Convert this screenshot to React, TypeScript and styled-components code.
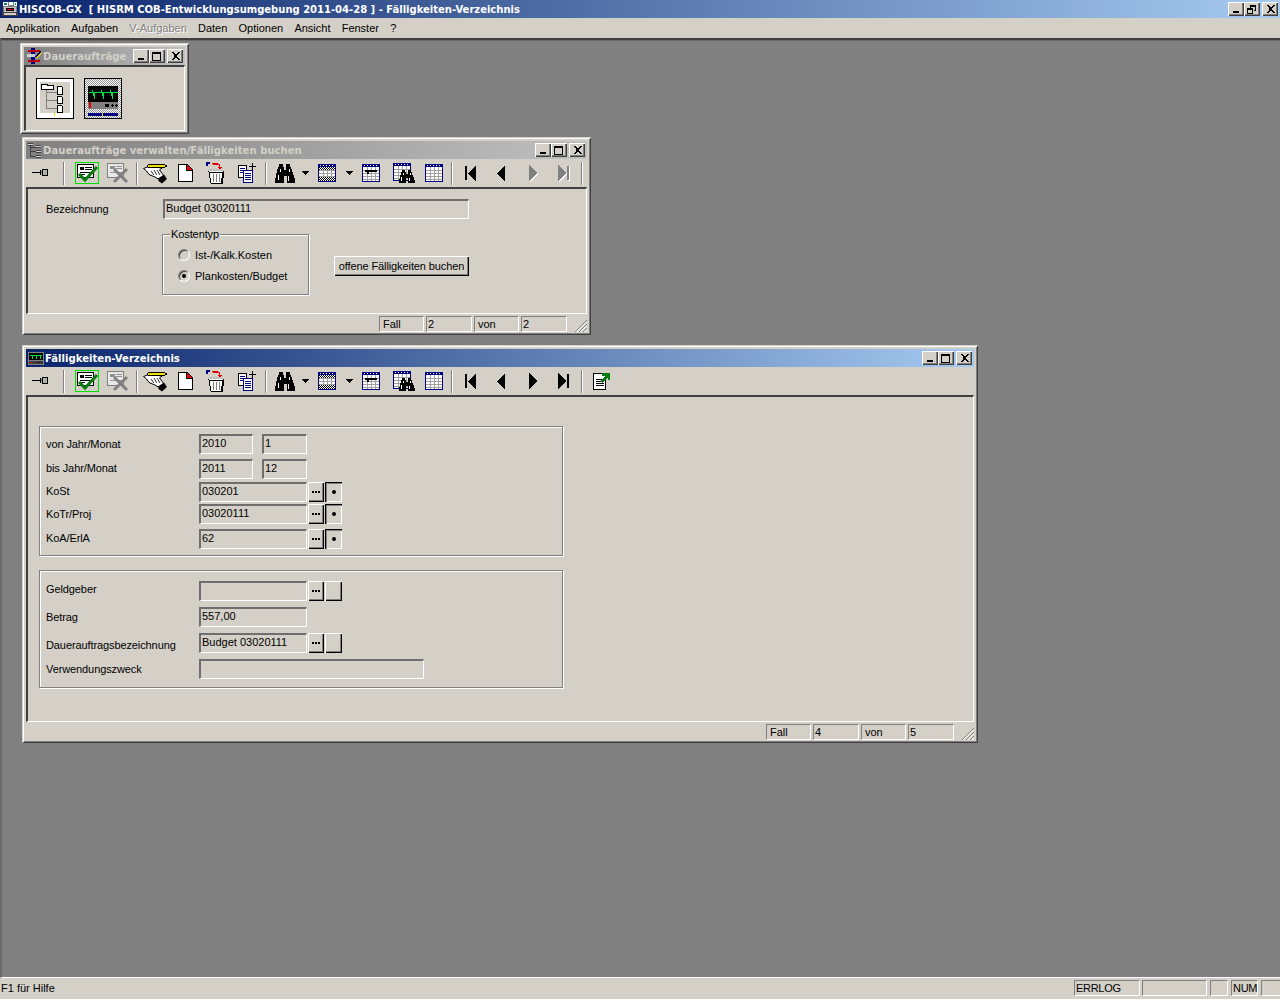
import React from "react";
import styled, { createGlobalStyle } from "styled-components";

const FACE = "#d4d0c8";

const GlobalStyle = createGlobalStyle`
  html, body {
    margin: 0;
    padding: 0;
    background: ${FACE};
  }
  * {
    box-sizing: border-box;
  }
`;

const Frame = styled.div`
  width: 1280px;
  height: 1000px;
  display: flex;
  flex-direction: column;
  overflow: hidden;
  background: ${FACE};
  font-family: "Liberation Sans", Arial, sans-serif;
  font-size: 11px;
  color: #000;
`;

const AppTitle = styled.div`
  height: 18px;
  flex: none;
  display: flex;
  align-items: center;
  padding: 0 2px 0 2px;
  background: linear-gradient(to right, #0a246a, #a6caf0);
  color: #fff;
  font-family: "DejaVu Sans", Verdana, sans-serif;
  font-weight: bold;
  font-size: 10px;
  white-space: pre;
`;

const AppTitleText = styled.span`
  flex: 1;
  margin-left: 1px;
`;

const MenuBar = styled.div`
  height: 20px;
  flex: none;
  display: flex;
  align-items: center;
  gap: 11.2px;
  padding-left: 6px;
`;

const MenuItem = styled.span<{ $disabled?: boolean }>`
  color: ${(p) => (p.$disabled ? "#808080" : "#000")};
  text-shadow: ${(p) => (p.$disabled ? "1px 1px 0 #fff" : "none")};
`;

const Desktop = styled.div`
  position: relative;
  flex: 1;
  background: #808080;
  border-top: 2px solid #404040;
  border-left: 2px solid #6a6a6a;
  border-bottom: 1px solid #fff;
  box-shadow: inset 0 1px 0 #6a6a6a;
`;

const Win = styled.div<{ $x: number; $y: number; $w: number; $h: number }>`
  position: absolute;
  left: ${(p) => p.$x}px;
  top: ${(p) => p.$y}px;
  width: ${(p) => p.$w}px;
  height: ${(p) => p.$h}px;
  display: flex;
  flex-direction: column;
  padding: 4px 4px 3px;
  background: ${FACE};
  box-shadow: inset 1px 1px 0 ${FACE}, inset -1px -1px 0 #404040,
    inset 2px 2px 0 #fff, inset -2px -2px 0 #808080;
`;

const WinTitle = styled.div<{ $active?: boolean }>`
  height: 18px;
  flex: none;
  display: flex;
  align-items: center;
  padding: 0 2px 0 2px;
  background: ${(p) =>
    p.$active
      ? "linear-gradient(to right, #0a246a, #a6caf0)"
      : "linear-gradient(to right, #808080, #c0c0c0)"};
  color: ${(p) => (p.$active ? "#fff" : FACE)};
  font-family: "DejaVu Sans", Verdana, sans-serif;
  font-weight: bold;
  font-size: 10.1px;
  white-space: nowrap;
`;

const WinTitleText = styled.span`
  flex: 1;
  margin-left: 1px;
  overflow: hidden;
`;

const CaptionButtons = styled.div`
  display: flex;
  flex: none;
`;

const CapButton = styled.div<{ $close?: boolean }>`
  width: 16px;
  height: 14px;
  margin-left: ${(p) => (p.$close ? "2px" : "0")};
  display: flex;
  align-items: center;
  justify-content: center;
  background: ${FACE};
  box-shadow: inset 1px 1px 0 #fff, inset -1px -1px 0 #404040,
    inset -2px -2px 0 #808080;
`;

const Toolbar = styled.div`
  height: 28px;
  flex: none;
  display: flex;
  align-items: center;
`;

const ToolSlot = styled.div<{ $w: number }>`
  width: ${(p) => p.$w}px;
  height: 24px;
  flex: none;
  display: flex;
  align-items: center;
  justify-content: center;
`;

const ToolSep = styled.div`
  width: 2px;
  height: 23px;
  background: #808080;
  border-right: 1px solid #fff;
`;

const Body = styled.div`
  flex: 1;
  min-height: 0;
  border-top: 2px solid #404040;
  border-left: 2px solid #404040;
  border-right: 1px solid #fff;
  border-bottom: 1px solid #fff;
`;

const IconBody = styled(Body)`
  display: flex;
  gap: 10px;
  padding: 11px 0 0 10px;
`;

const OrderBody = styled(Body)`
  padding: 10px 0 0 18px;
`;

const ListBody = styled(Body)`
  padding: 29px 0 0 11px;
`;

const StatusRow = styled.div`
  height: 18px;
  flex: none;
  display: flex;
  justify-content: flex-end;
  align-items: flex-end;
  gap: 2px;
`;

const StatusCell = styled.div<{ $w: number }>`
  width: ${(p) => p.$w}px;
  height: 16px;
  padding-left: ${(p) => (p.$w === 46 ? 1 : 3)}px;
  line-height: 14px;
  border-top: 1px solid #808080;
  border-left: 1px solid #808080;
  border-right: 1px solid #fff;
  border-bottom: 1px solid #fff;
`;

const Grip = styled.div`
  width: 18px;
  height: 16px;
  display: flex;
  align-items: flex-end;
  justify-content: flex-end;
`;

const Row = styled.div`
  display: flex;
  align-items: center;
`;

const FormRow = styled(Row)<{ $top?: number }>`
  height: 19px;
  margin-top: ${(p) => p.$top ?? 0}px;
`;

const FieldLabel = styled.span<{ $w: number; $nudge?: number }>`
  width: ${(p) => p.$w}px;
  flex: none;
  margin-top: ${(p) => (p.$nudge ?? 0) * 2}px;
  letter-spacing: -0.1px;
  white-space: nowrap;
`;

const Field = styled.div<{ $w: number; $ml?: number }>`
  width: ${(p) => p.$w}px;
  height: 20px;
  flex: none;
  margin-left: ${(p) => p.$ml ?? 0}px;
  padding-left: 1px;
  line-height: 15px;
  border-top: 2px solid #6e6e6e;
  border-left: 2px solid #6e6e6e;
  border-right: 1px solid #fff;
  border-bottom: 1px solid #fff;
  white-space: nowrap;
`;

const Group = styled.div<{ $top?: number; $pt: number; $pb: number }>`
  width: 524px;
  margin-top: ${(p) => p.$top ?? 0}px;
  padding: ${(p) => p.$pt}px 0 ${(p) => p.$pb}px 6px;
  border: 1px solid #808080;
  box-shadow: 1px 1px 0 #fff, inset 1px 1px 0 #fff;
`;

const PickButton = styled.div<{ $pressed?: boolean; $plain?: boolean }>`
  width: ${(p) => (p.$pressed || p.$plain ? "17px" : "16px")};
  height: 20px;
  flex: none;
  display: flex;
  align-items: center;
  justify-content: center;
  margin-left: 1px;
  box-shadow: ${(p) =>
    p.$pressed
      ? "inset 1px 1px 0 #000, inset 2px 2px 0 #808080, inset -1px -1px 0 #fff"
      : "inset 1px 1px 0 #fff, inset -1px -1px 0 #000, inset -2px -2px 0 #808080"};
`;

const Ellipsis = styled.span`
  display: block;
  width: 8px;
  height: 2px;
  margin-right: 1px;
  background: repeating-linear-gradient(
    to right,
    #000 0 2px,
    transparent 2px 3px
  );
`;

const Dot = styled.span`
  display: block;
  width: 4px;
  height: 4px;
  margin: 1px 0 0 1px;
  background: #000;
  border-radius: 50%;
`;

const TypeRow = styled(Row)`
  align-items: flex-start;
  margin: 10px 0 0 116px;
`;

const TypeBox = styled.fieldset`
  width: 147px;
  height: 67px;
  margin: 0;
  padding: 3px 0 0 0;
  border: 1px solid #808080;
  box-shadow: 1px 1px 0 #fff, inset 1px 1px 0 #fff;
`;

const TypeLegend = styled.legend`
  padding: 0 1px;
  margin-left: 7px;
  line-height: 13px;
  letter-spacing: -0.1px;
  background: ${FACE};
`;

const RadioRow = styled(Row)`
  height: 21px;
  gap: 5px;
  margin-left: 15px;
`;

const Radio = styled.span<{ $on?: boolean }>`
  width: 12px;
  height: 12px;
  flex: none;
  border-radius: 50%;
  display: flex;
  align-items: center;
  justify-content: center;
  border: 1px solid;
  border-color: #808080 #fff #fff #808080;
  box-shadow: inset 1px 1px 0 #404040, inset -1px -1px 0 ${FACE};
  &::after {
    content: "";
    width: 4px;
    height: 4px;
    border-radius: 50%;
    background: ${(p) => (p.$on ? "#000" : "transparent")};
  }
`;

const PushButton = styled.div`
  width: 135px;
  height: 20px;
  margin: 28px 0 0 25px;
  display: flex;
  align-items: center;
  justify-content: center;
  letter-spacing: -0.1px;
  white-space: nowrap;
  box-shadow: inset 1px 1px 0 #fff, inset -1px -1px 0 #000,
    inset -2px -2px 0 #808080;
`;

const BottomBar = styled.div`
  height: 22px;
  flex: none;
  display: flex;
  align-items: center;
  justify-content: space-between;
  padding: 0 0 2px 1px;
  border-bottom: 1px solid #fff;
`;

const BottomCells = styled.div`
  display: flex;
  margin-right: -1px;
`;

const BottomCell = styled.div<{ $w: number; $ml: number }>`
  width: ${(p) => p.$w}px;
  height: 16px;
  margin-left: ${(p) => p.$ml}px;
  padding-left: 1px;
  line-height: 15px;
  letter-spacing: -0.3px;
  border-top: 1px solid #808080;
  border-left: 1px solid #808080;
  border-right: 1px solid #fff;
  border-bottom: 1px solid #fff;
`;

const Pixel: React.FC<{ w: number; h: number; children: React.ReactNode }> = ({
  w,
  h,
  children,
}) => (
  <svg
    width={w}
    height={h}
    viewBox={`0 0 ${w} ${h}`}
    shapeRendering="crispEdges"
    style={{ display: "block", flex: "none" }}
  >
    {children}
  </svg>
);

const MinGlyph = () => (
  <Pixel w={9} h={9}>
    <rect x="1" y="6" width="6" height="2" fill="#000" />
  </Pixel>
);
const MaxGlyph = () => (
  <Pixel w={10} h={9}>
    <path d="M0 0h9v9H0zM1 2v6h7V2z" fill="#000" fillRule="evenodd" />
  </Pixel>
);
const RestoreGlyph = () => (
  <Pixel w={10} h={9}>
    <path
      d="M3 0h6v6H7V5h1V2H4v1H3zM0 3h6v6H0zM1 5v3h4V5z"
      fill="#000"
      fillRule="evenodd"
    />
  </Pixel>
);
const CloseGlyph = () => (
  <Pixel w={9} h={8}>
    <path
      d="M0 0h2l2 2h1l2-2h2L6 3v2l3 3H7L5 6H4L2 8H0l3-3V3z"
      fill="#000"
    />
  </Pixel>
);

const PinIcon = () => (
  <Pixel w={18} h={12}>
    <path d="M0 5h8v1H0z" fill="#000" />
    <path d="M8 3h1v5H8z" fill="#000" />
    <path d="M9 4h1v3H9z" fill="#808080" />
    <path d="M10 2h6v1h-6zM10 8h6v1h-6zM15 2h1v7h-1zM10 2h1v7h-1z" fill="#000" />
    <path d="M11 3h4v5h-4z" fill="#b0b0b0" />
  </Pixel>
);

const CardIcon = () => (
  <Pixel w={24} h={22}>
    <rect x="0.5" y="0.5" width="23" height="21" fill="none" stroke="#00e000" />
    <path d="M2 2h17v14H2z" fill="#000" />
    <path d="M3 3h15v12H3z" fill="#fff" />
    <path d="M5 5h4v3H5zM10 5h7v1h-7zM10 7h7v1h-7zM5 10h12v1H5zM5 12h5v1H5z" fill="#000" />
    <polyline
      points="4,12 10,18 22,5"
      fill="none"
      stroke="#087b10"
      strokeWidth="3"
      shapeRendering="auto"
    />
  </Pixel>
);

const CardOffIcon = () => (
  <Pixel w={24} h={22}>
    <path d="M1 1h17v15H1z" fill="#808080" />
    <path d="M2 2h15v13H2z" fill="#e8e8e8" />
    <path d="M4 4h5v3H4zM10 4h6v1h-6zM10 6h6v1h-6zM4 10h12v1H4z" fill="#909090" />
    <path
      d="M8 7l13 13M21 7L8 20"
      fill="none"
      stroke="#808080"
      strokeWidth="3"
      shapeRendering="auto"
    />
  </Pixel>
);

const HandIcon = () => (
  <Pixel w={24} h={21}>
    <g shapeRendering="auto">
      <path
        d="M0.5 5.5L6 3.5 19 5 16.5 7 21 13 17 17 12 14 6 11.5 3.5 8z"
        fill="#fff"
        stroke="#000"
      />
      <path d="M8 8l3 4M11 7l3 5M14 7l3 5" fill="none" stroke="#000" strokeWidth="0.8" />
      <path d="M15 15.5L21 11.5 24 16 19 20.5 15.5 18z" fill="#000" />
    </g>
    <path d="M5 1h17v1H5zM5 4h17v1H5zM22 2h2v2h-2zM4 2h1v2H4z" fill="#000" />
    <path d="M5 2h17v2H5z" fill="#f0e000" />
  </Pixel>
);

const PageIcon = () => (
  <Pixel w={15} h={18}>
    <path d="M0 0h9l6 6v12H0z" fill="#000" />
    <path d="M1 1h7v6h6v10H1z" fill="#fff" />
    <path d="M9 1l5 5H9z" fill="#e00000" />
  </Pixel>
);

const TrashIcon = () => (
  <Pixel w={20} h={22}>
    <path d="M0 0h4v2H2v2H0z" fill="#000080" />
    <path d="M6 1h6v1h2v3h2l-2 3-3-3h2V3H7V2H6z" fill="#e00000" />
    <path d="M2 9h16v2l-1 10-1 1H5l-1-1-1-10-1-1z" fill="#000" />
    <path d="M3 9h14v1H3zM4 11h12l-1 10H5z" fill="#fff" />
    <path d="M7 12h1v8H7zM10 12h1v8h-1zM13 12h1v8h-1z" fill="#808080" />
    <path d="M3 7h14v2H3z" fill="#c0c0c0" />
  </Pixel>
);

const CopyIcon = () => (
  <Pixel w={18} h={20}>
    <path d="M0 2h9v13H0z" fill="#000" />
    <path d="M1 3h7v11H1z" fill="#fff" />
    <path d="M2 5h5v1H2zM2 7h5v1H2zM2 9h5v1H2z" fill="#000080" />
    <path d="M5 7h10v13H5z" fill="#000080" />
    <path d="M6 8h8v11H6z" fill="#fff" />
    <path d="M7 10h6v1H7zM7 12h6v1H7zM7 14h6v1H7zM7 16h6v1H7z" fill="#000080" />
    <path d="M14 0h1v3h3v1h-3v3h-1V4h-3V3h3z" fill="#000" />
  </Pixel>
);

const BinocularShape = () => (
  <>
    <path d="M4 1h4v3h1v3h2V4V1h4v3h1l4 13v3h-8v-7H9v7H0v-3L3 4h1z" fill="#000" />
    <path d="M5 6h1v3H5zM14 6h1v3h-1zM3 12h1v5H3zM13 13h1v5h-1z" fill="#fff" />
  </>
);

const BinocularIcon = () => (
  <Pixel w={20} h={21}>
    <BinocularShape />
  </Pixel>
);

const Drop = () => (
  <Pixel w={7} h={4}>
    <path d="M0 0h7v1H6v1H5v1H4v1H3V3H2V2H1V1H0z" fill="#000" />
  </Pixel>
);

const TableLines = () => (
  <>
    <path d="M0 0h18v18H0z" fill="#000080" />
    <path d="M1 3h16v14H1z" fill="#fff" />
    <path
      d="M1 6h16v1H1zM1 9h16v1H1zM1 12h16v1H1zM1 15h16v1H1zM5 3h1v14H5zM9 3h1v14H9zM13 3h1v14h-1z"
      fill="#a0a0a0"
    />
    <path d="M2 1h1v1H2zM5 1h1v1H5zM8 1h1v1H8zM11 1h1v1h-1zM14 1h1v1h-1z" fill="#fff" />
  </>
);

const CheckerIcon = () => (
  <Pixel w={18} h={18}>
    <defs>
      <pattern id="chk" width="2" height="2" patternUnits="userSpaceOnUse">
        <rect width="2" height="2" fill="#fff" />
        <rect width="1" height="1" fill="#000" />
        <rect x="1" y="1" width="1" height="1" fill="#000" />
      </pattern>
    </defs>
    <TableLines />
    <path d="M1 3h16v3H1zM1 13h16v4H1z" fill="url(#chk)" />
  </Pixel>
);

const FormTableIcon = () => (
  <Pixel w={18} h={18}>
    <TableLines />
    <path d="M3 6h12v2H7v2H5V8H3z" fill="#000" />
  </Pixel>
);

const FindTableIcon = () => (
  <Pixel w={22} h={20}>
    <TableLines />
    <g transform="translate(6 6) scale(0.78 0.68)">
      <BinocularShape />
    </g>
  </Pixel>
);

const TableIcon = () => (
  <Pixel w={18} h={18}>
    <TableLines />
  </Pixel>
);

const Arrow: React.FC<{ d: string; w: number; off?: boolean }> = ({ d, w, off }) => (
  <Pixel w={w + 1} h={17}>
    {off && <path d={d} fill="#fff" transform="translate(1 1)" />}
    <path d={d} fill={off ? "#808080" : "#000"} />
  </Pixel>
);

const FIRST = "M0 1h2v14H0zM11 0v16h-1L3 8z";
const PREV = "M8 0v16h-1L0 8z";
const NEXT = "M0 0v16h1l7-8z";
const LAST = "M9 1h2v14H9zM0 0v16h1l7-8z";

const ExportIcon = () => (
  <Pixel w={17} h={18}>
    <path d="M0 1h10l3 3v14H0z" fill="#000" />
    <path d="M1 2h8l3 3v12H1z" fill="#fff" />
    <path d="M3 7h7v1H3zM3 9h8v1H3zM3 11h8v1H3zM3 13h8v1H3z" fill="#000" />
    <path d="M9 1h8v7h-2V5l-6 6-2-2 6-5H9z" fill="#087b10" />
  </Pixel>
);

const GripIcon = () => (
  <Pixel w={14} h={13}>
    <g stroke="#808080" strokeWidth="1" shapeRendering="auto">
      <path d="M2 13L14 1M6 13l8-8M10 13l4-4" />
    </g>
    <g stroke="#fff" strokeWidth="1" shapeRendering="auto">
      <path d="M3.5 13L14 2.5M7.5 13L14 6.5M11.5 13L14 10.5" />
    </g>
  </Pixel>
);

const AppIcon = () => (
  <Pixel w={16} h={16}>
    <path d="M1 1h14v14H1z" fill="#808080" />
    <path d="M1 1h5v4H1zM7 1h4v3H7zM12 1h3v4h-3z" fill="#fff" />
    <path d="M2 2h3v2H2zM13 2h1v2h-1z" fill="#00807f" />
    <path d="M2 6h12v5H2z" fill="#c0c0c0" />
    <path d="M4 7h8v3H4z" fill="#000" />
    <path d="M5 8h6v1H5z" fill="#e00000" />
    <path d="M0 11h16v4H0z" fill="#404040" />
    <path d="M2 12h12v2H2z" fill="#d4d0c8" />
  </Pixel>
);

const OrdersIcon = () => (
  <Pixel w={16} h={16}>
    <path d="M5 0h4v16H5z" fill="#000080" />
    <path d="M2 2h12v2H2zM2 12h12v2H2z" fill="#c00000" />
    <path d="M1 6h8v3H1z" fill="#d0d0d0" />
    <path d="M9 9l5-6 2 2-5 6z" fill="#e8d000" />
    <path d="M9 9l5-6 1 1-5 6z" fill="#000080" />
  </Pixel>
);

const TreeSmallIcon = () => (
  <Pixel w={14} h={15}>
    <path d="M0 0h5v3H0zM8 2h5v3H8zM8 7h5v3H8zM8 12h5v3H8z" fill="#d4d0c8" />
    <path d="M0 0h5v1H0zM0 2h5v1H0zM8 2h5v1H8zM8 4h5v1H8zM8 7h5v1H8zM8 9h5v1H8zM8 12h5v1H8zM8 14h5v1H8z" fill="#404040" />
    <path d="M2 3h1v10h5v1H2zM3 4h5v1H3zM3 8h5v1H3z" fill="#404040" />
  </Pixel>
);

const MonitorSmallIcon = () => (
  <Pixel w={16} h={13}>
    <path d="M0 0h16v13H0z" fill="#808080" />
    <path d="M1 1h14v7H1z" fill="#000" />
    <path d="M2 3h12v1H2zM4 3h1v4H4zM8 3h1v4H8zM12 3h1v4h-1z" fill="#00e040" />
    <path d="M1 9h14v3H1z" fill="#404040" />
    <path d="M2 10h2v1H2z" fill="#e00000" />
    <path d="M9 10h1v1H9zM11 10h1v1h-1zM13 10h1v1h-1z" fill="#000" />
  </Pixel>
);

const TreeTile = () => (
  <Pixel w={38} h={41}>
    <path d="M0 0h38v41H0z" fill="#000" />
    <path d="M1 1h36v39H1z" fill="#fff" />
    <path d="M4 4h30v31H4z" fill="#d4d0c8" />
    <path d="M5 6h7v1h6v5H5z" fill="#000" />
    <path d="M6 7h5v1h6v3H6z" fill="#fff" />
    <path d="M10 12h1v19h-1zM11 14h10v1H11zM11 22h10v1H11zM11 30h10v1H11z" fill="#808080" />
    <path d="M21 8h4l2 2v7h-6zM21 18h4l2 2v6h-6zM21 27h4l2 2v6h-6z" fill="#000" />
    <path d="M22 9h3l1 1v6h-4zM22 19h3l1 1v5h-4zM22 28h3l1 1v5h-4z" fill="#fff" />
    <path d="M18 35h1v3h-1z" fill="#f0e000" />
  </Pixel>
);

const MonitorTile = () => (
  <Pixel w={38} h={41}>
    <defs>
      <pattern id="dots" width="2" height="2" patternUnits="userSpaceOnUse">
        <rect width="2" height="2" fill="#fff" />
        <rect width="1" height="1" fill="#909090" />
        <rect x="1" y="1" width="1" height="1" fill="#909090" />
      </pattern>
    </defs>
    <path d="M0 0h38v41H0z" fill="#000" />
    <path d="M1 1h36v39H1z" fill="url(#dots)" />
    <path d="M4 8h30v16H4z" fill="#000" />
    <path d="M4 24h30v7H4z" fill="#808080" />
    <path
      d="M5 14h29v1H5zM8 12h1v2H8zM10 15h1v6h-1zM9 15h1v3H9zM17 12h1v2h-1zM19 15h1v6h-1zM18 15h1v3h-1zM26 12h1v2h-1zM28 15h1v6h-1zM27 15h1v3h-1z"
      fill="#00e040"
    />
    <path d="M5 24h2v6H5z" fill="#e00000" />
    <path d="M21 26h4v3h-4zM27 27h3v1h-3zM28 26h1v3h-1zM31 27h3v1h-3zM32 26h1v3h-1z" fill="#000" />
    <path d="M4 35h30v3H4z" fill="#000080" />
    <path d="M18 35h1v3h-1z" fill="#f0e000" />
  </Pixel>
);

interface ToolDef {
  w: number;
  node?: React.ReactNode;
}

const tools = (off: boolean, withExport: boolean): ToolDef[] => {
  const list: ToolDef[] = [
    { w: 30, node: <PinIcon /> },
    { w: 16 },
    { w: 30, node: <CardIcon /> },
    { w: 32, node: <CardOffIcon /> },
    { w: 6 },
    { w: 30, node: <HandIcon /> },
    { w: 30, node: <PageIcon /> },
    { w: 32, node: <TrashIcon /> },
    { w: 30, node: <CopyIcon /> },
    { w: 8 },
    { w: 30, node: <BinocularIcon /> },
    { w: 10, node: <Drop /> },
    { w: 34, node: <CheckerIcon /> },
    { w: 10, node: <Drop /> },
    { w: 34, node: <FormTableIcon /> },
    { w: 32, node: <FindTableIcon /> },
    { w: 28, node: <TableIcon /> },
    { w: 8 },
    { w: 30, node: <Arrow d={FIRST} w={11} /> },
    { w: 30, node: <Arrow d={PREV} w={8} /> },
    { w: 34, node: <Arrow d={NEXT} w={8} off={off} /> },
    { w: 28, node: <Arrow d={LAST} w={11} off={off} /> },
    { w: 8 },
  ];
  if (withExport) list.push({ w: 30, node: <ExportIcon /> });
  return list;
};

const ToolRow: React.FC<{ off?: boolean; withExport?: boolean }> = ({ off, withExport }) => (
  <Toolbar>
    {tools(!!off, !!withExport).map((t, i) => (
      <ToolSlot key={i} $w={t.w}>
        {t.node ?? <ToolSep />}
      </ToolSlot>
    ))}
  </Toolbar>
);

const Caption: React.FC<{
  icon: React.ReactNode;
  title: string;
  active?: boolean;
}> = ({ icon, title, active }) => (
  <WinTitle $active={active}>
    {icon}
    <WinTitleText>{title}</WinTitleText>
    <CaptionButtons>
      <CapButton><MinGlyph /></CapButton>
      <CapButton><MaxGlyph /></CapButton>
      <CapButton $close><CloseGlyph /></CapButton>
    </CaptionButtons>
  </WinTitle>
);

const Status: React.FC<{ count: string; total: string }> = ({ count, total }) => (
  <StatusRow>
    <StatusCell $w={45}>Fall</StatusCell>
    <StatusCell $w={46}>{count}</StatusCell>
    <StatusCell $w={45}>von</StatusCell>
    <StatusCell $w={46}>{total}</StatusCell>
    <Grip><GripIcon /></Grip>
  </StatusRow>
);

const Picker: React.FC<{ pressed?: boolean }> = ({ pressed }) => (
  <>
    <PickButton><Ellipsis /></PickButton>
    <PickButton $pressed={pressed} $plain={!pressed}>{pressed && <Dot />}</PickButton>
  </>
);

const App: React.FC = () => (
  <Frame>
    <GlobalStyle />
    <AppTitle>
      <AppIcon />
      <AppTitleText>HISCOB-GX  [ HISRM COB-Entwicklungsumgebung 2011-04-28 ] - Fälligkeiten-Verzeichnis</AppTitleText>
      <CaptionButtons>
        <CapButton><MinGlyph /></CapButton>
        <CapButton><RestoreGlyph /></CapButton>
        <CapButton $close><CloseGlyph /></CapButton>
      </CaptionButtons>
    </AppTitle>
    <MenuBar>
      <MenuItem>Applikation</MenuItem>
      <MenuItem>Aufgaben</MenuItem>
      <MenuItem $disabled>V-Aufgaben</MenuItem>
      <MenuItem>Daten</MenuItem>
      <MenuItem>Optionen</MenuItem>
      <MenuItem>Ansicht</MenuItem>
      <MenuItem>Fenster</MenuItem>
      <MenuItem>?</MenuItem>
    </MenuBar>
    <Desktop>
      <Win $x={18} $y={3} $w={169} $h={91}>
        <Caption icon={<OrdersIcon />} title="Daueraufträge" />
        <IconBody>
          <TreeTile />
          <MonitorTile />
        </IconBody>
      </Win>

      <Win $x={20} $y={97} $w={569} $h={198}>
        <Caption icon={<TreeSmallIcon />} title="Daueraufträge verwalten/Fälligkeiten buchen" />
        <ToolRow off />
        <OrderBody>
          <FormRow>
            <FieldLabel $w={117}>Bezeichnung</FieldLabel>
            <Field $w={306}>Budget 03020111</Field>
          </FormRow>
          <TypeRow>
            <TypeBox>
              <TypeLegend>Kostentyp</TypeLegend>
              <RadioRow>
                <Radio />
                <span>Ist-/Kalk.Kosten</span>
              </RadioRow>
              <RadioRow>
                <Radio $on />
                <span>Plankosten/Budget</span>
              </RadioRow>
            </TypeBox>
            <PushButton>offene Fälligkeiten buchen</PushButton>
          </TypeRow>
        </OrderBody>
        <Status count="2" total="2" />
      </Win>

      <Win $x={20} $y={305} $w={956} $h={398}>
        <Caption icon={<MonitorSmallIcon />} title="Fälligkeiten-Verzeichnis" active />
        <ToolRow withExport />
        <ListBody>
          <Group $pt={7} $pb={7}>
            <FormRow>
              <FieldLabel $w={153}>von Jahr/Monat</FieldLabel>
              <Field $w={54}>2010</Field>
              <Field $w={45} $ml={9}>1</Field>
            </FormRow>
            <FormRow $top={6}>
              <FieldLabel $w={153} $nudge={-1}>bis Jahr/Monat</FieldLabel>
              <Field $w={54}>2011</Field>
              <Field $w={45} $ml={9}>12</Field>
            </FormRow>
            <FormRow $top={4}>
              <FieldLabel $w={153} $nudge={-1}>KoSt</FieldLabel>
              <Field $w={108}>030201</Field>
              <Picker pressed />
            </FormRow>
            <FormRow $top={3}>
              <FieldLabel $w={153}>KoTr/Proj</FieldLabel>
              <Field $w={108}>03020111</Field>
              <Picker pressed />
            </FormRow>
            <FormRow $top={6}>
              <FieldLabel $w={153} $nudge={-1}>KoA/ErlA</FieldLabel>
              <Field $w={108}>62</Field>
              <Picker pressed />
            </FormRow>
          </Group>
          <Group $top={14} $pt={10} $pb={9}>
            <FormRow>
              <FieldLabel $w={153} $nudge={-2}>Geldgeber</FieldLabel>
              <Field $w={108} />
              <Picker />
            </FormRow>
            <FormRow $top={7}>
              <FieldLabel $w={153}>Betrag</FieldLabel>
              <Field $w={108}>557,00</Field>
            </FormRow>
            <FormRow $top={7}>
              <FieldLabel $w={153} $nudge={2}>Dauerauftragsbezeichnung</FieldLabel>
              <Field $w={108}>Budget 03020111</Field>
              <Picker />
            </FormRow>
            <FormRow $top={7}>
              <FieldLabel $w={153}>Verwendungszweck</FieldLabel>
              <Field $w={225} />
            </FormRow>
          </Group>
        </ListBody>
        <Status count="4" total="5" />
      </Win>
    </Desktop>
    <BottomBar>
      <span>F1 für Hilfe</span>
      <BottomCells>
        <BottomCell $w={66} $ml={0}>ERRLOG</BottomCell>
        <BottomCell $w={65} $ml={2}></BottomCell>
        <BottomCell $w={18} $ml={3}></BottomCell>
        <BottomCell $w={27} $ml={3}>NUM</BottomCell>
        <BottomCell $w={20} $ml={3}></BottomCell>
      </BottomCells>
    </BottomBar>
  </Frame>
);

export default App;
